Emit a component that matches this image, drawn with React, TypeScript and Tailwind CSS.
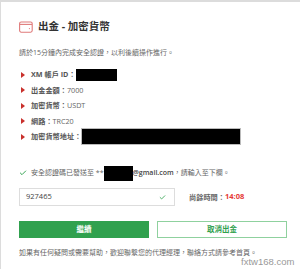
import { Check } from "lucide-react";

const FONT = "font-['Open_Sans','Noto_Sans_CJK_TC',sans-serif]";

const ROWS: { label: string; value?: string; box?: string }[] = [
  { label: "XM 帳戶 ID：", box: "w-[41px] h-[12px]" },
  { label: "出金金額：", value: "7000" },
  { label: "加密貨幣：", value: "USDT" },
  { label: "網路：", value: "TRC20" },
  { label: "加密貨幣地址：", box: "w-[160px] h-[17px] border border-[#bbb]" },
];

function WalletIcon() {
  return (
    <svg width="14" height="12" viewBox="0 0 14 12" fill="none" stroke="#e07b7b" strokeWidth="1.1">
      <rect x="0.6" y="1" width="12.6" height="10.2" rx="1.6" />
      <path d="M1 3.4h12" />
      <circle cx="10.4" cy="7.6" r="0.6" fill="#e07b7b" stroke="none" />
    </svg>
  );
}

function Bullet() {
  return <span className="w-0 h-0 border-y-[3px] border-y-transparent border-l-[4px] border-l-[#c9302c] mr-[6px]" />;
}

export default function App() {
  return (
    <div className={`relative w-[300px] h-[269px] overflow-hidden bg-white border-t-2 border-l border-[#dcdcdc] ${FONT}`}>
      <div className="pl-[18px] pt-[19px]">
        <div className="flex items-center h-[11px]">
          <WalletIcon />
          <span className="ml-[5px] text-[10.5px] leading-[11px] font-bold text-[#333]">出金 - 加密貨幣</span>
        </div>

        <div className="mt-[16px] h-[10px] text-[7px] leading-[10px] text-[#666]">
          請於15分鐘內完成安全認證，以利後續操作進行。
        </div>

        <div className="mt-[9px] pl-[2px]">
          {ROWS.map((r) => (
            <div key={r.label} className="flex items-center h-[15.5px] text-[7.2px]">
              <Bullet />
              <span className="font-bold text-[#555]">{r.label}</span>
              {r.value && <span className="text-[#666]">{r.value}</span>}
              {r.box && <span className={`bg-black ${r.box}`} />}
            </div>
          ))}
        </div>

        <div className="mt-[21px] flex items-center h-[15px] text-[7px] text-[#666]">
          <Check className="w-[8px] h-[8px] text-[#3aa757] mr-[4px]" strokeWidth={3} />
          <span>安全認證碼已發送至 **</span>
          <span className="bg-black w-[29px] h-[15px]" />
          <span className="font-semibold text-[#444]">@gmail.com</span>
          <span>，請輸入至下欄。</span>
        </div>

        <div className="mt-[7.5px] flex items-center">
          <div className="w-[156px] h-[18px] border border-[#ddd] flex items-center justify-between px-[6px]">
            <span className="text-[7.5px] text-[#444]">927465</span>
            <Check className="w-[7px] h-[7px] text-[#3aa757] mr-[2px]" strokeWidth={3} />
          </div>
          <span className="ml-[14px] text-[7.2px] font-bold text-[#666]">尚餘時間：</span>
          <span className="text-[7.5px] font-bold text-[#e53935]">14:08</span>
        </div>

        <div className="mt-[15px] flex gap-[8px]">
          <button className="w-[130px] h-[17px] bg-[#30a14e] text-white text-[7.5px] font-bold">繼續</button>
          <button className="w-[130px] h-[17px] border border-[#8fd19e] text-[#30a14e] text-[7.5px] font-bold">取消出金</button>
        </div>

        <div className="mt-[10px] h-[10px] text-[7px] leading-[10px] text-[#666]">
          如果有任何疑問或需要幫助，歡迎聯繫您的代理經理，聯絡方式請參考首頁。
        </div>
      </div>

      <span className="absolute left-[240px] top-[254px] text-[9.5px] leading-[12px] text-[#999] font-['Liberation_Sans',sans-serif]">fxtw168.com</span>
    </div>
  );
}
